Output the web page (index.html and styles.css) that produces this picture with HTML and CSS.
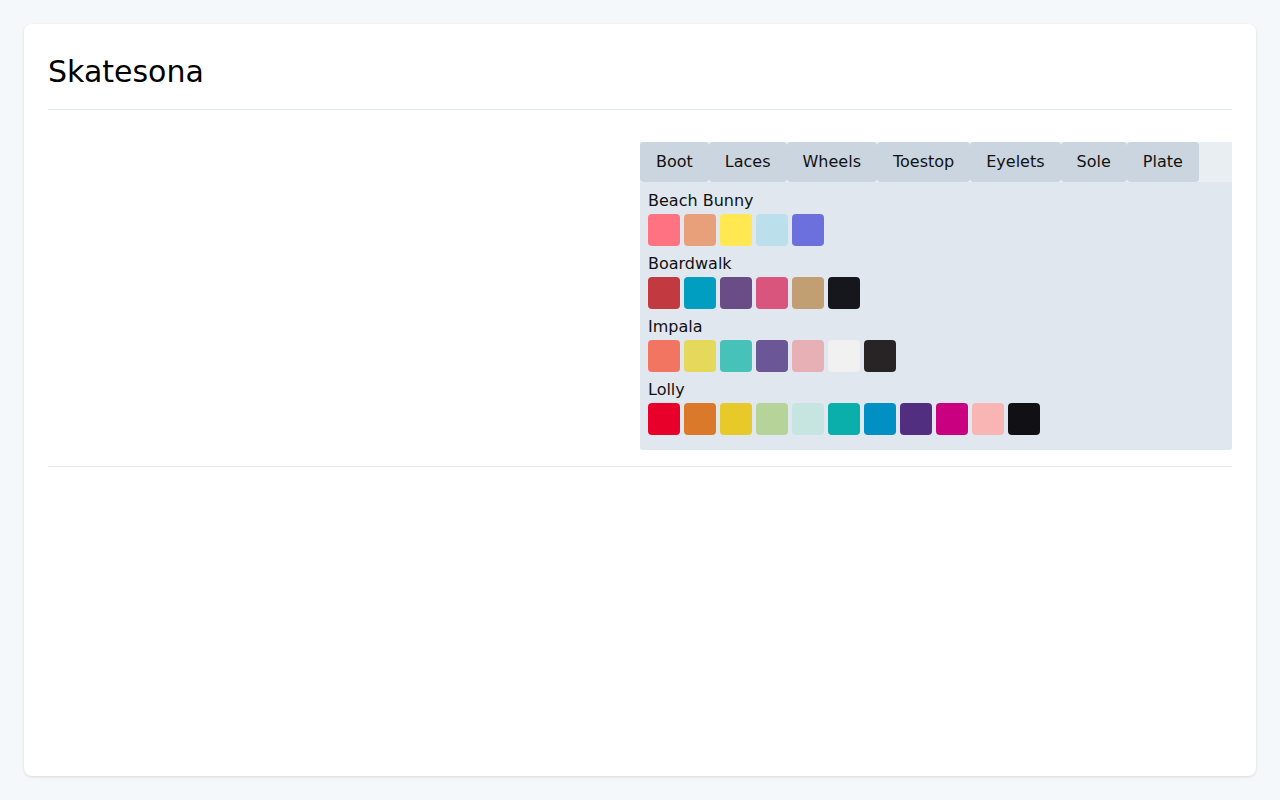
FILE: index.html
```html
<!DOCTYPE html>
<html lang="en">
<head>
<meta charset="utf-8">
<title>Skatesona</title>
<link rel="stylesheet" href="styles.css">
</head>
<body>
<div class="card">
  <header class="header">
    <h1 class="title">Skatesona</h1>
  </header>
  <main class="main">
    <div class="preview"></div>
    <div class="editor">
      <div class="tabs">
        <div class="tab">Boot</div>
        <div class="tab">Laces</div>
        <div class="tab">Wheels</div>
        <div class="tab">Toestop</div>
        <div class="tab">Eyelets</div>
        <div class="tab">Sole</div>
        <div class="tab">Plate</div>
      </div>
      <div class="panel">
        <div class="group">
          <div class="label">Beach Bunny</div>
          <div class="swatches">
            <span class="swatch" style="background:#ff7281"></span>
            <span class="swatch" style="background:#e8a07a"></span>
            <span class="swatch" style="background:#ffe852"></span>
            <span class="swatch" style="background:#bbe0eb"></span>
            <span class="swatch" style="background:#6b70dd"></span>
          </div>
        </div>
        <div class="group">
          <div class="label">Boardwalk</div>
          <div class="swatches">
            <span class="swatch" style="background:#c23a40"></span>
            <span class="swatch" style="background:#009ec0"></span>
            <span class="swatch" style="background:#6a4d87"></span>
            <span class="swatch" style="background:#d9557e"></span>
            <span class="swatch" style="background:#c29f73"></span>
            <span class="swatch" style="background:#15171c"></span>
          </div>
        </div>
        <div class="group">
          <div class="label">Impala</div>
          <div class="swatches">
            <span class="swatch" style="background:#f17561"></span>
            <span class="swatch" style="background:#e5d95c"></span>
            <span class="swatch" style="background:#47c2b9"></span>
            <span class="swatch" style="background:#6c5796"></span>
            <span class="swatch" style="background:#e6b0b5"></span>
            <span class="swatch" style="background:#f1f1f1"></span>
            <span class="swatch" style="background:#282426"></span>
          </div>
        </div>
        <div class="group">
          <div class="label">Lolly</div>
          <div class="swatches">
            <span class="swatch" style="background:#e8002a"></span>
            <span class="swatch" style="background:#db792a"></span>
            <span class="swatch" style="background:#e8c92a"></span>
            <span class="swatch" style="background:#b6d39a"></span>
            <span class="swatch" style="background:#c6e5e0"></span>
            <span class="swatch" style="background:#0aaeab"></span>
            <span class="swatch" style="background:#0090c4"></span>
            <span class="swatch" style="background:#522e80"></span>
            <span class="swatch" style="background:#c9007f"></span>
            <span class="swatch" style="background:#f9b4b4"></span>
            <span class="swatch" style="background:#111114"></span>
          </div>
        </div>
      </div>
    </div>
  </main>
</div>
</body>
</html>
```
FILE: styles.css
```css
html, body {
  height: 100%;
}
body {
  margin: 0;
  padding: 24px;
  box-sizing: border-box;
  background: #f5f8fb;
  font-family: "DejaVu Sans", sans-serif;
  color: #111;
}
.card {
  height: 100%;
  box-sizing: border-box;
  background: #fff;
  border-radius: 8px;
  box-shadow: 0 1px 3px rgba(0, 0, 0, 0.12);
  padding: 24px;
}
.header {
  padding: 6px 0 20px;
  border-bottom: 1px solid #e2e6ee;
}
.title {
  margin: 0;
  font-size: 30px;
  font-weight: normal;
  line-height: 35px;
  color: #000;
}
.main {
  margin-top: 32px;
  padding-bottom: 16px;
  border-bottom: 1px solid #e2e8f0;
  display: grid;
  grid-template-columns: 1fr 1fr;
}
.tabs {
  display: flex;
  background: #e9eef3;
}
.tab {
  height: 40px;
  line-height: 40px;
  padding: 0 16px;
  font-size: 16px;
  background: #cbd5df;
  border-radius: 4px;
}
.panel {
  background: #e0e7ef;
  padding: 8px 8px 7px;
  border-radius: 0 0 3px 3px;
}
.group {
  margin-bottom: 8px;
}
.label {
  font-size: 16px;
  line-height: 20px;
  margin: 1px 0 3px;
}
.swatches {
  display: flex;
  gap: 4px;
}
.swatch {
  width: 32px;
  height: 32px;
  border-radius: 4px;
}
```
